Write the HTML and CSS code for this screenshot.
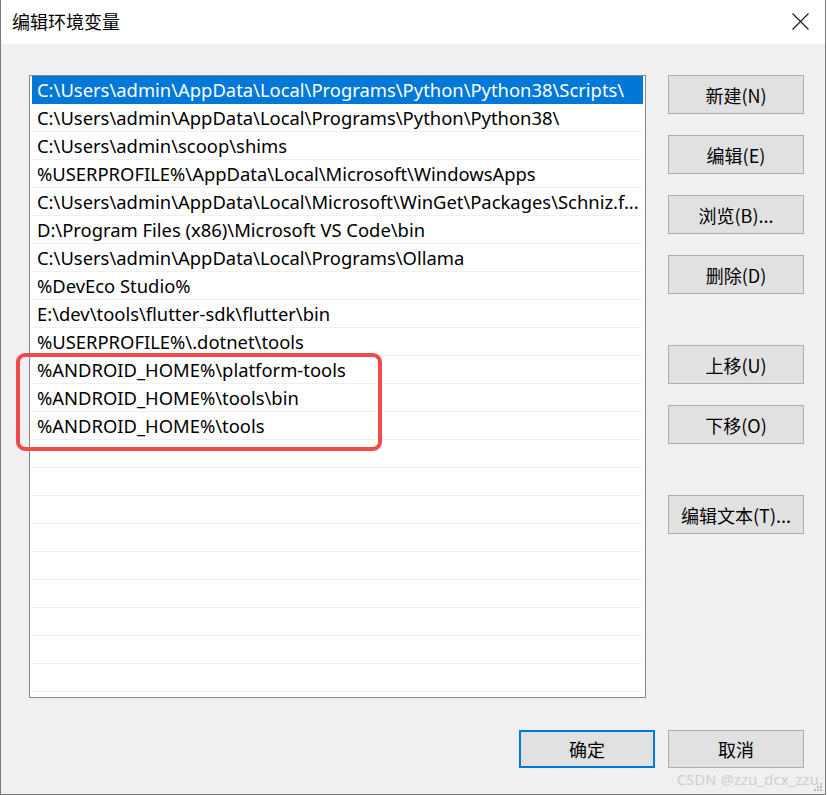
FILE: index.html
```html
<!DOCTYPE html>
<html lang="zh-CN">
<head>
<meta charset="utf-8">
<title>编辑环境变量</title>
<link rel="stylesheet" href="styles.css">
</head>
<body>
<div class="window">
  <div class="titlebar">
    <span class="title">编辑环境变量</span>
    <svg class="close" width="17" height="17" viewBox="0 0 17 17"><path d="M0.5 0.5 L16.5 16.5 M16.5 0.5 L0.5 16.5" stroke="#1a1a1a" stroke-width="1.1" fill="none"/></svg>
  </div>
  <div class="content">
    <div class="main">
      <div class="listwrap">
        <ul class="list">
          <li class="row selected">C:\Users\admin\AppData\Local\Programs\Python\Python38\Scripts\</li>
          <li class="row">C:\Users\admin\AppData\Local\Programs\Python\Python38\</li>
          <li class="row">C:\Users\admin\scoop\shims</li>
          <li class="row">%USERPROFILE%\AppData\Local\Microsoft\WindowsApps</li>
          <li class="row">C:\Users\admin\AppData\Local\Microsoft\WinGet\Packages\Schniz.f...</li>
          <li class="row">D:\Program Files (x86)\Microsoft VS Code\bin</li>
          <li class="row">C:\Users\admin\AppData\Local\Programs\Ollama</li>
          <li class="row">%DevEco Studio%</li>
          <li class="row">E:\dev\tools\flutter-sdk\flutter\bin</li>
          <li class="row">%USERPROFILE%\.dotnet\tools</li>
          <li class="row">%ANDROID_HOME%\platform-tools</li>
          <li class="row">%ANDROID_HOME%\tools\bin</li>
          <li class="row">%ANDROID_HOME%\tools</li>
          <li class="row"></li>
          <li class="row"></li>
          <li class="row"></li>
          <li class="row"></li>
          <li class="row"></li>
          <li class="row"></li>
          <li class="row"></li>
          <li class="row"></li>
          <li class="row"></li>
        </ul>
        <div class="highlight"></div>
      </div>
      <div class="side">
        <div class="group">
          <button class="btn">新建(N)</button>
          <button class="btn">编辑(E)</button>
          <button class="btn">浏览(B)...</button>
          <button class="btn">删除(D)</button>
        </div>
        <div class="group">
          <button class="btn">上移(U)</button>
          <button class="btn">下移(O)</button>
        </div>
        <div class="group">
          <button class="btn">编辑文本(T)...</button>
        </div>
      </div>
    </div>
    <div class="footer">
      <button class="btn default">确定</button>
      <button class="btn">取消</button>
    </div>
    <div class="watermark">CSDN @zzu_dcx_zzu</div>
    <svg class="grip" width="9" height="9" viewBox="0 0 9 9">
      <rect x="6" y="0" width="2" height="2" fill="#b9b9b9"/>
      <rect x="3" y="3" width="2" height="2" fill="#b9b9b9"/>
      <rect x="6" y="3" width="2" height="2" fill="#b9b9b9"/>
      <rect x="0" y="6" width="2" height="2" fill="#b9b9b9"/>
      <rect x="3" y="6" width="2" height="2" fill="#b9b9b9"/>
      <rect x="6" y="6" width="2" height="2" fill="#b9b9b9"/>
    </svg>
  </div>
</div>
</body>
</html>
```
FILE: styles.css
```css
* { box-sizing: border-box; }
html, body {
  margin: 0;
  padding: 0;
  background: #ffffff;
}
body {
  width: 827px;
  height: 795px;
  overflow: hidden;
  font-family: "Noto Sans", "Noto Sans CJK SC", sans-serif;
  color: #000;
}
.window {
  width: 826px;
  height: 795px;
  border-left: 1px solid #7a7a7a;
  border-right: 1px solid #7a7a7a;
  border-bottom: 1px solid #7a7a7a;
  display: flex;
  flex-direction: column;
  background: #f0f0f0;
}
.titlebar {
  height: 44px;
  background: #ffffff;
  display: flex;
  align-items: center;
  justify-content: space-between;
  padding: 0 16px 0 11px;
  flex: none;
}
.title {
  font-family: "Noto Sans CJK SC", sans-serif;
  font-size: 18px;
  line-height: 1;
  margin-top: -2px;
}
.close { display: block; margin-top: -1px; }
.content {
  position: relative;
  flex: 1;
  padding: 31px 0 0 28px;
  display: flex;
  flex-direction: column;
}
.main {
  display: flex;
  gap: 22px;
}
.listwrap {
  position: relative;
  width: 617px;
  height: 623px;
  flex: none;
}
.list {
  list-style: none;
  margin: 0;
  padding: 0 2px;
  height: 623px;
  background: #ffffff;
  border: 1px solid #828790;
}
.row {
  height: 28px;
  border-bottom: 1px solid #f0f0f0;
  padding-left: 5px;
  font-size: 18.4px;
  line-height: 28px;
  white-space: nowrap;
  overflow: hidden;
}
.row.selected {
  background: #0078d7;
  color: #ffffff;
  border-bottom-color: #0078d7;
}
.highlight {
  position: absolute;
  left: -13px;
  top: 278px;
  width: 366px;
  height: 98px;
  border: 4px solid #f04a4a;
  border-radius: 9px;
  pointer-events: none;
}
.side {
  display: flex;
  flex-direction: column;
  gap: 51px;
}
.group {
  display: flex;
  flex-direction: column;
  gap: 21px;
}
.btn {
  width: 136px;
  height: 39px;
  background: #e1e1e1;
  border: 1px solid #adadad;
  font-family: "Noto Sans CJK SC", sans-serif;
  font-size: 18px;
  color: #000;
  padding: 0;
  margin: 0;
  line-height: 1;
}
.footer {
  margin-top: 32px;
  display: flex;
  gap: 13px;
  padding-left: 490px;
}
.footer .btn { height: 38px; }
.btn.default {
  border: 2px solid #0078d7;
}
.watermark {
  position: absolute;
  right: 6px;
  bottom: 5px;
  font-family: "Noto Sans", sans-serif;
  font-size: 14.5px;
  color: #cdcdcd;
  letter-spacing: 0.3px;
}
.grip {
  position: absolute;
  right: 2px;
  bottom: 2px;
}
```
